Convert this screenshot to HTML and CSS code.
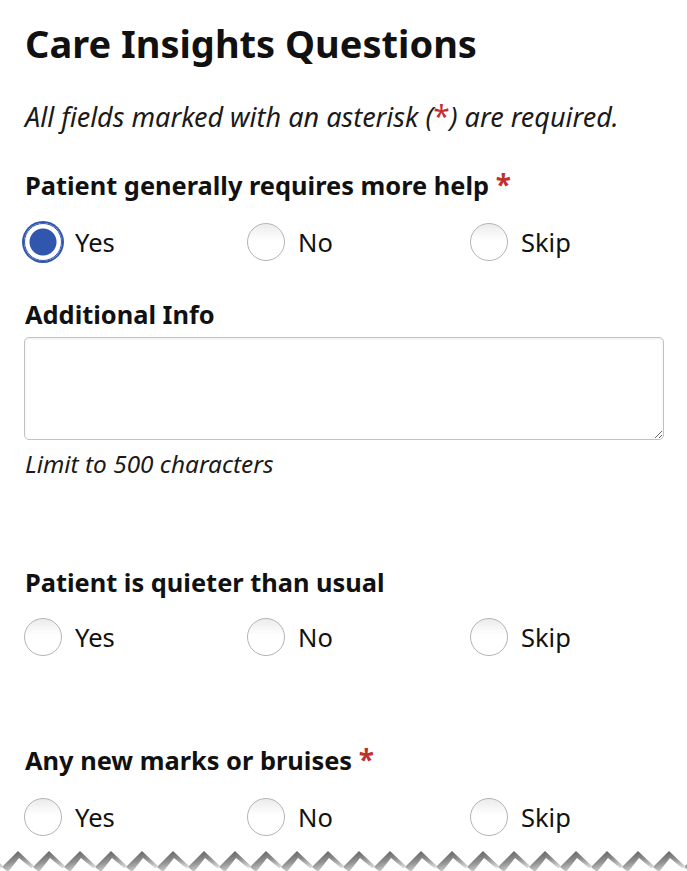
FILE: index.html
```html
<!DOCTYPE html>
<html lang="en">
<head>
<meta charset="utf-8">
<title>Care Insights Questions</title>
<link rel="stylesheet" href="styles.css">
</head>
<body>
<main class="page">
  <h1 class="title">Care Insights Questions</h1>
  <p class="intro">All fields marked with an asterisk (<span class="req-inline">*</span>) are required.</p>

  <fieldset class="question q1">
    <legend class="label">Patient generally requires more help <span class="req">*</span></legend>
    <div class="options">
      <label class="option"><input type="radio" name="q1" checked><span>Yes</span></label>
      <label class="option"><input type="radio" name="q1"><span>No</span></label>
      <label class="option"><input type="radio" name="q1"><span>Skip</span></label>
    </div>
  </fieldset>

  <div class="field">
    <label class="label" for="info">Additional Info</label>
    <textarea id="info" class="textarea"></textarea>
    <p class="hint">Limit to 500 characters</p>
  </div>

  <fieldset class="question q2">
    <legend class="label">Patient is quieter than usual</legend>
    <div class="options">
      <label class="option"><input type="radio" name="q2"><span>Yes</span></label>
      <label class="option"><input type="radio" name="q2"><span>No</span></label>
      <label class="option"><input type="radio" name="q2"><span>Skip</span></label>
    </div>
  </fieldset>

  <fieldset class="question q3">
    <legend class="label">Any new marks or bruises <span class="req">*</span></legend>
    <div class="options">
      <label class="option"><input type="radio" name="q3"><span>Yes</span></label>
      <label class="option"><input type="radio" name="q3"><span>No</span></label>
      <label class="option"><input type="radio" name="q3"><span>Skip</span></label>
    </div>
  </fieldset>
</main>
<div class="torn">
  <svg width="687" height="26" viewBox="0 0 687 26" aria-hidden="true">
    <defs>
      <linearGradient id="g" x1="0" y1="0" x2="0.4" y2="1">
        <stop offset="0" stop-color="#555555"/>
        <stop offset="0.55" stop-color="#8f8f8f"/>
        <stop offset="1" stop-color="#dcdcdc"/>
      </linearGradient>
      <pattern id="zig" x="0" y="0" width="31" height="26" patternUnits="userSpaceOnUse">
        <path d="M2 22 L18 6 L34 21 L31.5 23.5 L19 13 L8 27 Z" fill="url(#g)"/>
        <path d="M-29 22 L-13 6 L3 21 L0.5 23.5 L-12 13 L-23 27 Z" fill="url(#g)"/>
      </pattern>
    </defs>
    <rect x="0" y="0" width="687" height="26" fill="url(#zig)"/>
  </svg>
</div>
</body>
</html>
```

FILE: styles.css
```css
html, body {
  margin: 0;
  padding: 0;
  background: #ffffff;
}

body {
  font-family: "Noto Sans", "Open Sans", sans-serif;
  color: #111111;
  width: 687px;
  height: 871px;
  overflow: hidden;
  position: relative;
}

.page {
  padding: 20px 23px 0 25px;
}

.title {
  font-size: 38px;
  line-height: 46px;
  font-weight: 700;
  margin: 0;
}

.intro {
  font-size: 27px;
  line-height: 34px;
  font-style: italic;
  margin: 33px 0 0;
  color: #1a1a1a;
}

.req-inline {
  color: #c0302c;
  font-style: normal;
  font-size: 30px;
}

.req {
  color: #c0302c;
  font-weight: 700;
  font-size: 28px;
}

.question {
  border: 0;
  padding: 0;
  margin: 0;
  min-width: 0;
}

.label {
  display: block;
  font-size: 25.4px;
  line-height: 34px;
  height: 34px;
  font-weight: 700;
  padding: 0;
  margin: 0;
}

.q1 { margin-top: 33px; }
.q2 { margin-top: 86px; }
.q3 { margin-top: 84px; }

.q2 .options { margin-top: 17px; }

.options {
  display: flex;
  margin-top: 20px;
  height: 42px;
}

.option {
  flex: none;
  width: 223px;
  display: flex;
  align-items: center;
  gap: 13px;
  font-size: 25.5px;
  line-height: 42px;
  margin-left: -1px;
}

.option + .option {
  margin-left: 0;
}

.option input {
  appearance: none;
  -webkit-appearance: none;
  width: 38px;
  height: 38px;
  margin: 0;
  border-radius: 50%;
  border: 1px solid #b4b4b4;
  background: linear-gradient(#ebebeb, #ffffff 45%);
  flex: none;
}

.option input:checked {
  border-color: #3156ae;
  box-shadow: 0 0 0 2px #3156ae;
  background: radial-gradient(circle, #3156ae 0 13px, #ffffff 14px);
}

.field {
  margin-top: 34px;
}

.textarea {
  display: block;
  box-sizing: border-box;
  width: 640px;
  height: 103px;
  margin: 6px 0 0 -1px;
  border: 1px solid #c2c2c2;
  border-radius: 5px;
  box-shadow: inset 0 1px 3px rgba(0, 0, 0, 0.08);
  background: #ffffff;
  font-family: inherit;
  font-size: 18px;
}

.hint {
  font-size: 24.4px;
  line-height: 30px;
  font-style: italic;
  margin: 9px 0 0;
  color: #1a1a1a;
}

.torn {
  position: absolute;
  left: 0;
  top: 845px;
  width: 687px;
  height: 26px;
}

.torn svg {
  display: block;
}
```
